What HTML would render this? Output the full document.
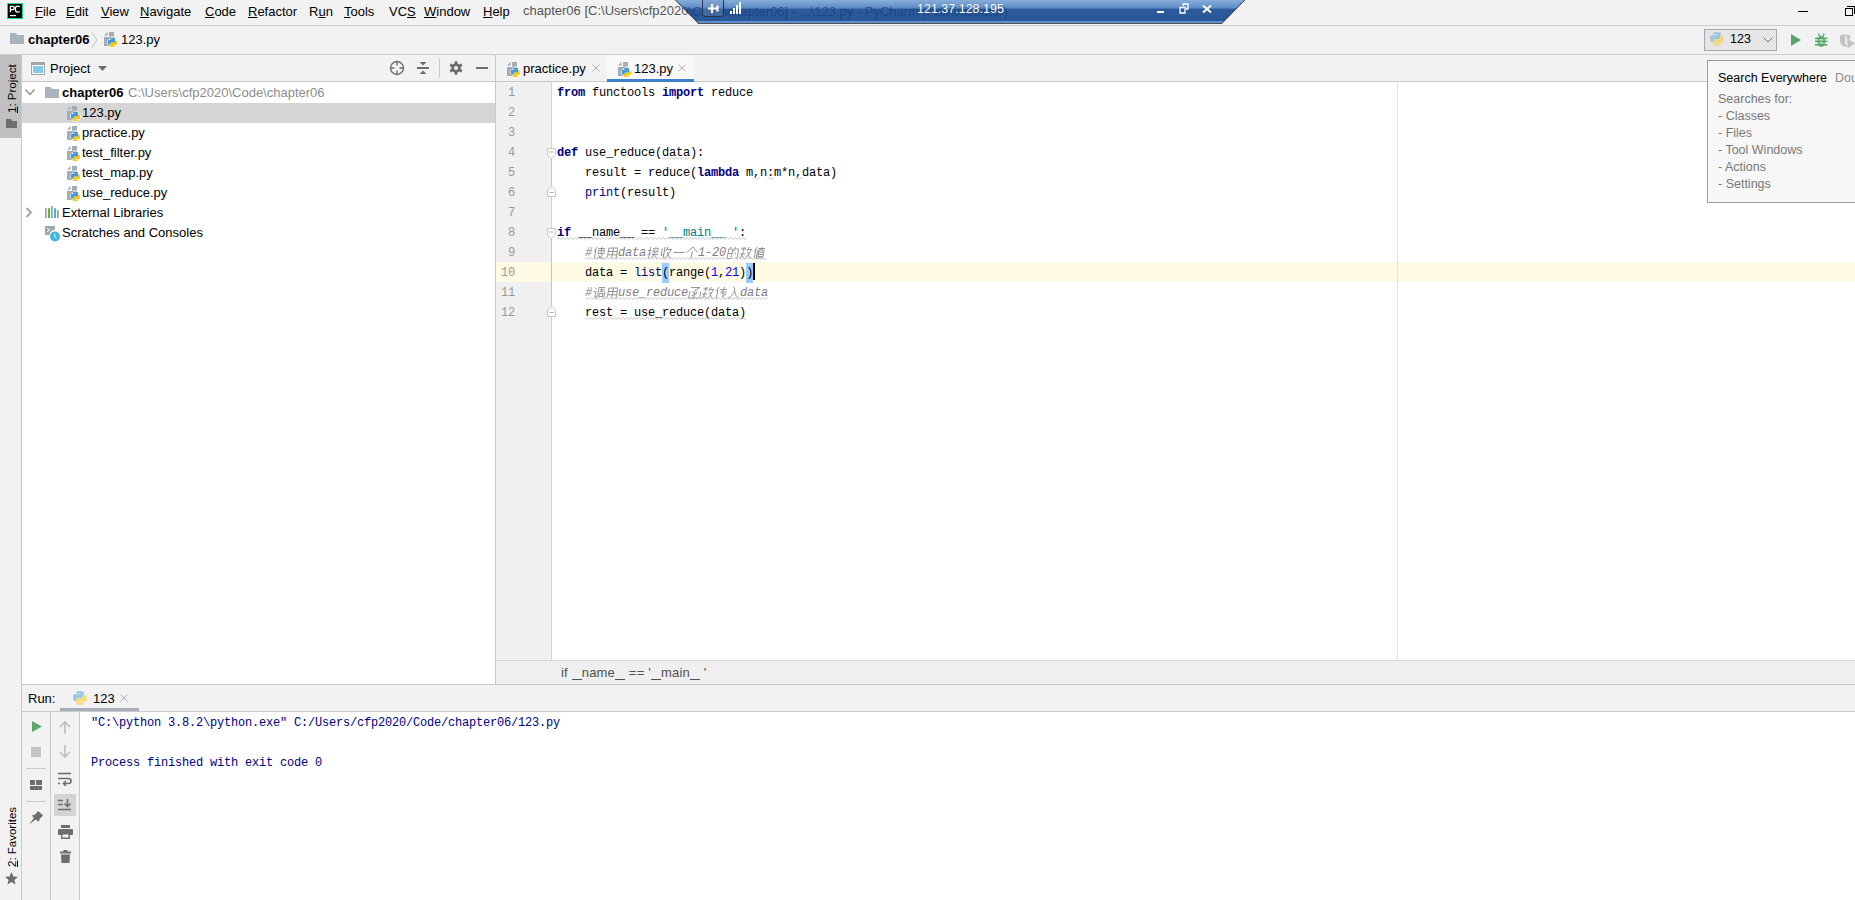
<!DOCTYPE html>
<html><head><meta charset="utf-8">
<style>
*{margin:0;padding:0;box-sizing:border-box}
html,body{width:1855px;height:900px;overflow:hidden;background:#f2f2f2;font-family:"Liberation Sans",sans-serif;font-size:13px;color:#000}
.a{position:absolute}
.t{position:absolute;white-space:pre;line-height:1}
.hl{position:absolute;height:1px;background:#c9c9c9}
.vl{position:absolute;width:1px;background:#c9c9c9}
.mono{font-family:"Liberation Mono",monospace}
u{text-decoration:underline;text-underline-offset:1px}
.menu{top:5px}
#gut div,#code div{height:20px;line-height:20px;white-space:pre;font-size:12px;letter-spacing:-0.2px}
.kw{color:#000080;font-weight:bold}
.bi{color:#000080}
.st{color:#008080}
.nu{color:#0000ff}
.cm{color:#808080;font-style:italic}
.cj{display:inline-block;width:13px;height:20px;vertical-align:top;letter-spacing:0}
.cj svg{display:block}
.br{background:#99ccff;display:inline-block;height:20px;vertical-align:top}
.caret{display:inline-block;width:2px;height:17px;background:#000;vertical-align:-4px}
.wv{text-decoration:underline wavy #c8c8c8;text-underline-offset:3px}
</style></head><body>
<svg width="0" height="0" style="position:absolute">
<defs>
<symbol id="pyf" viewBox="0 0 16 16">
<path d="M0 3.6L3.6 0V3.6Z" fill="#a2adb5"/>
<path d="M5 0H10V4.6H5Z" fill="#a2adb5"/>
<path d="M0 5H10V14H0Z" fill="#a2adb5"/>
<path d="M7 6H10Q11 6 11 7V9.5Q11 10.5 10 10.5H7.5Q6.5 10.5 6.5 11.5V12.5H5Q4 12.5 4 11.5V9Q4 8 5 8H8.5V7.5H6V7Q6 6 7 6Z" fill="#429bd6" stroke="#fff" stroke-width="1.2" paint-order="stroke"/>
<path d="M10 15H7Q6 15 6 14V11.5Q6 10.5 7 10.5H9.5Q10.5 10.5 10.5 9.5V8.5H12Q13 8.5 13 9.5V12Q13 13 12 13H8.5V13.5H11V14Q11 15 10 15Z" fill="#ffc80a" stroke="#fff" stroke-width="1.2" paint-order="stroke"/>
<path d="M7 6H10Q11 6 11 7V9.5Q11 10.5 10 10.5H7.5Q6.5 10.5 6.5 11.5V12.5H5Q4 12.5 4 11.5V9Q4 8 5 8H8.5V7.5H6V7Q6 6 7 6Z" fill="#429bd6"/>
</symbol>
<symbol id="py" viewBox="3.8 5.8 9.4 9.4">
<path d="M7 6H10Q11 6 11 7V9.5Q11 10.5 10 10.5H7.5Q6.5 10.5 6.5 11.5V12.5H5Q4 12.5 4 11.5V9Q4 8 5 8H8.5V7.5H6V7Q6 6 7 6Z" fill="#429bd6"/>
<path d="M10 15H7Q6 15 6 14V11.5Q6 10.5 7 10.5H9.5Q10.5 10.5 10.5 9.5V8.5H12Q13 8.5 13 9.5V12Q13 13 12 13H8.5V13.5H11V14Q11 15 10 15Z" fill="#ffc80a"/>
</symbol>
</defs>
</svg>

<!-- MENU BAR -->
<svg class="a" style="left:7px;top:3px" width="16" height="16"><rect x="0" y="0" width="16" height="16" fill="#21d789"/><rect x="1" y="1" width="14" height="14" fill="#000"/><g stroke="#fff" stroke-width="1.3" fill="none"><path d="M3.4 9.2V3.3H5.5Q7.2 3.3 7.2 5Q7.2 6.7 5.5 6.7H3.4"/><path d="M12.7 3.9Q12 3.2 10.6 3.2Q8.3 3.2 8.3 6.1Q8.3 9.1 10.6 9.1Q12 9.1 12.7 8.4"/></g><rect x="3" y="12" width="6" height="1.2" fill="#fff"/></svg>
<div class="t menu" style="left:35px"><u>F</u>ile</div>
<div class="t menu" style="left:66px"><u>E</u>dit</div>
<div class="t menu" style="left:101px"><u>V</u>iew</div>
<div class="t menu" style="left:140px"><u>N</u>avigate</div>
<div class="t menu" style="left:205px"><u>C</u>ode</div>
<div class="t menu" style="left:248px"><u>R</u>efactor</div>
<div class="t menu" style="left:309px">R<u>u</u>n</div>
<div class="t menu" style="left:344px"><u>T</u>ools</div>
<div class="t menu" style="left:389px">VC<u>S</u></div>
<div class="t menu" style="left:424px"><u>W</u>indow</div>
<div class="t menu" style="left:483px"><u>H</u>elp</div>
<div class="t" style="left:523px;top:4px;color:#555">chapter06 [C:\Users\cfp2020\Code\chapter06] - ...\123.py - PyCharm (Administrator)</div>
<div class="a" style="left:1798px;top:11px;width:10px;height:1px;background:#000"></div>
<div class="a" style="left:1845px;top:8px;width:8px;height:8px;border:1px solid #000"></div>
<div class="a" style="left:1847px;top:6px;width:8px;height:8px;border-top:1px solid #000;border-right:1px solid #000"></div>
<div class="hl" style="left:0;top:25px;width:1855px;background:#cdcdcd"></div>

<!-- NAV BAR -->
<svg class="a" style="left:10px;top:33px" width="14" height="11"><path d="M0 0H6L7 2H14V11H0Z" fill="#aab4bd"/></svg>
<div class="t" style="left:28px;top:33px;font-weight:bold">chapter06</div>
<svg class="a" style="left:91px;top:32px" width="7" height="16"><path d="M1 0.5L6 8L1 15.5" stroke="#c0c0c0" fill="none" stroke-width="1"/></svg>
<svg class="a" style="left:104px;top:32px" width="16" height="16"><use href="#pyf"/></svg>
<div class="t" style="left:121px;top:33px">123.py</div>

<!-- RUN CONFIG -->
<div class="a" style="left:1704px;top:29px;width:73px;height:22px;background:#e6e6e6;border:1px solid #a8a8a8"></div>
<svg class="a" style="left:1710px;top:32px;opacity:.45" width="14" height="14"><use href="#py"/></svg>
<div class="t" style="left:1730px;top:33px;font-size:12.5px">123</div>
<svg class="a" style="left:1763px;top:37px" width="10" height="6"><path d="M0.5 0.5L5 5L9.5 0.5" stroke="#6e6e6e" fill="none"/></svg>
<svg class="a" style="left:1791px;top:34px" width="10" height="12"><path d="M0 0L10 6L0 12Z" fill="#59a869"/></svg>
<svg class="a" style="left:1815px;top:33px" width="13" height="15"><g fill="#59a869"><ellipse cx="6.3" cy="8.3" rx="3.8" ry="5.6"/><rect x="0" y="4.6" width="12.4" height="1.6"/><rect x="0" y="7.6" width="12.4" height="1.6"/><rect x="0" y="11" width="12.4" height="1.6"/></g><path d="M3.3 0.5L4.8 3.3M9.3 0.5L7.8 3.3" stroke="#59a869" stroke-width="1.4"/><rect x="4.3" y="6.3" width="4" height="1.2" fill="#f2f2f2" opacity=".9"/><rect x="4.3" y="9.3" width="4" height="1.2" fill="#f2f2f2" opacity=".9"/></svg>
<svg class="a" style="left:1840px;top:34px" width="15" height="15"><path d="M0 1.3Q5 -0.5 10 1.3V7Q10 11 5 13Q0 11 0 7Z" fill="#c2c2c2"/><rect x="5" y="1.5" width="1.6" height="9" fill="#f2f2f2"/><path d="M7.5 4.5L15 9.5L7.5 14.5Z" fill="#c2c2c2" stroke="#f2f2f2" stroke-width="1" paint-order="stroke"/></svg>
<div class="hl" style="left:0;top:54px;width:1855px;background:#cdcdcd"></div>

<!-- LEFT STRIP -->
<div class="a" style="left:0;top:55px;width:21px;height:83px;background:#c0c0c0"></div>
<div class="t" style="left:7px;top:113px;font-size:11.5px;transform-origin:0 0;transform:rotate(-90deg)"><u>1</u>: Project</div>
<svg class="a" style="left:6px;top:119px" width="11" height="9"><path d="M0 0H5L6 2H11V9H0Z" fill="#6e6e6e"/></svg>
<div class="t" style="left:7px;top:867px;font-size:11.5px;transform-origin:0 0;transform:rotate(-90deg)"><u>2</u>: Favorites</div>
<svg class="a" style="left:5px;top:872px" width="13" height="13"><path d="M6.5 0L8.4 4.4L13 4.8L9.5 7.9L10.6 12.5L6.5 10L2.4 12.5L3.5 7.9L0 4.8L4.6 4.4Z" fill="#6e6e6e"/></svg>
<div class="vl" style="left:21px;top:55px;height:845px"></div>

<!-- PROJECT PANEL -->
<svg class="a" style="left:31px;top:62px" width="14" height="13"><rect x="0.5" y="0.5" width="13" height="12" fill="#fff" stroke="#a4a4a4"/><rect x="1" y="1" width="12" height="2" fill="#a4a4a4"/><rect x="2" y="4" width="10" height="7" fill="#80cbe8"/></svg>
<div class="t" style="left:50px;top:62px">Project</div>
<svg class="a" style="left:98px;top:66px" width="10" height="6"><path d="M0 0H9L4.5 5Z" fill="#6e6e6e"/></svg>
<svg class="a" style="left:389px;top:60px" width="16" height="16"><circle cx="8" cy="8" r="6.5" stroke="#6e6e6e" stroke-width="1.4" fill="none"/><path d="M8 1.5V5.5M8 10.5V14.5M1.5 8H5.5M10.5 8H14.5" stroke="#6e6e6e" stroke-width="1.4"/></svg>
<svg class="a" style="left:417px;top:61px" width="13" height="14"><path d="M2.5 1H9.5L6 4.5Z M2.5 13H9.5L6 9.5Z" fill="#6e6e6e"/><rect x="0" y="6" width="12" height="2" fill="#6e6e6e"/></svg>
<div class="a" style="left:439px;top:58px;width:1px;height:20px;background:#c9c9c9"></div>
<svg class="a" style="left:449px;top:61px" width="14" height="14"><g fill="#6e6e6e"><circle cx="7" cy="7" r="4.7"/><rect x="5.5" y="0.3" width="3" height="13.4" rx=".6"/><rect x="5.5" y="0.3" width="3" height="13.4" rx=".6" transform="rotate(60 7 7)"/><rect x="5.5" y="0.3" width="3" height="13.4" rx=".6" transform="rotate(120 7 7)"/></g><circle cx="7" cy="7" r="2" fill="#f2f2f2"/></svg>
<div class="a" style="left:476px;top:67px;width:12px;height:2px;background:#6e6e6e"></div>
<div class="hl" style="left:22px;top:81px;width:473px"></div>
<div class="a" style="left:22px;top:82px;width:473px;height:602px;background:#fff"></div>
<div class="a" style="left:22px;top:103px;width:473px;height:20px;background:#d5d5d5"></div>
<svg class="a" style="left:25px;top:89px" width="10" height="7"><path d="M0.5 0.5L5 5.5L9.5 0.5" stroke="#8c8c8c" stroke-width="1.3" fill="none"/></svg>
<svg class="a" style="left:45px;top:87px" width="14" height="11"><path d="M0 0H6L7 2H14V11H0Z" fill="#aab4bd"/></svg>
<div class="t" style="left:62px;top:86px;font-weight:bold">chapter06</div>
<div class="t" style="left:128px;top:86px;color:#8c8c8c">C:\Users\cfp2020\Code\chapter06</div>
<svg class="a" style="left:67px;top:106px" width="16" height="16"><use href="#pyf"/></svg>
<div class="t" style="left:82px;top:106px">123.py</div>
<svg class="a" style="left:67px;top:126px" width="16" height="16"><use href="#pyf"/></svg>
<div class="t" style="left:82px;top:126px">practice.py</div>
<svg class="a" style="left:67px;top:146px" width="16" height="16"><use href="#pyf"/></svg>
<div class="t" style="left:82px;top:146px">test_filter.py</div>
<svg class="a" style="left:67px;top:166px" width="16" height="16"><use href="#pyf"/></svg>
<div class="t" style="left:82px;top:166px">test_map.py</div>
<svg class="a" style="left:67px;top:186px" width="16" height="16"><use href="#pyf"/></svg>
<div class="t" style="left:82px;top:186px">use_reduce.py</div>
<svg class="a" style="left:25px;top:207px" width="9" height="12"><path d="M1.5 1L6 5.5L1.5 10" stroke="#a0a0a0" stroke-width="1.8" fill="none"/></svg>
<svg class="a" style="left:45px;top:206px" width="15" height="12"><g fill="#9aa7b0"><rect x="0" y="2.2" width="1.8" height="9.8"/><rect x="6" y="0" width="1.8" height="12"/><rect x="12" y="4" width="1.8" height="8"/></g><rect x="3" y="2.2" width="2" height="9.8" fill="#62b543"/><rect x="9" y="2.2" width="2" height="9.8" fill="#40b6e0"/></svg>
<div class="t" style="left:62px;top:206px">External Libraries</div>
<svg class="a" style="left:45px;top:226px" width="16" height="16"><path d="M0 0H10V3.5A5.6 5.6 0 0 0 4.6 9H0Z" fill="#9aa7b0"/><path d="M2 2L4.5 4L2 6" stroke="#fff" stroke-width="1" fill="none"/><circle cx="10" cy="10.5" r="5" fill="#40b6e0"/><path d="M9.7 7.7V10.5L11.5 12" stroke="#fff" stroke-width="1" fill="none"/></svg>
<div class="t" style="left:62px;top:226px">Scratches and Consoles</div>
<div class="vl" style="left:495px;top:55px;height:630px"></div>

<!-- EDITOR TABS -->
<div class="a" style="left:607px;top:55px;width:87px;height:24px;background:#f9f9f9"></div>
<svg class="a" style="left:507px;top:62px" width="16" height="16"><use href="#pyf"/></svg>
<div class="t" style="left:523px;top:62px">practice.py</div>
<svg class="a" style="left:592px;top:64px" width="9" height="9"><path d="M0.5 0.5L7.5 7.5M7.5 0.5L0.5 7.5" stroke="#a8a8a8" stroke-width=".9"/></svg>
<svg class="a" style="left:618px;top:62px" width="16" height="16"><use href="#pyf"/></svg>
<div class="t" style="left:634px;top:62px">123.py</div>
<svg class="a" style="left:678px;top:64px" width="9" height="9"><path d="M0.5 0.5L7.5 7.5M7.5 0.5L0.5 7.5" stroke="#a8a8a8" stroke-width=".9"/></svg>
<div class="hl" style="left:496px;top:81px;width:1359px"></div>
<div class="a" style="left:607px;top:79px;width:87px;height:3px;background:#3f80c8"></div>

<!-- EDITOR -->
<div class="a" style="left:496px;top:82px;width:1359px;height:578px;background:#fff"></div>
<div class="a" style="left:496px;top:82px;width:55px;height:578px;background:#f0f0f0"></div>
<div class="a" style="left:551px;top:82px;width:1px;height:578px;background:#d5d5d5"></div>
<div class="a" style="left:496px;top:262px;width:55px;height:20px;background:#fffae3"></div>
<div class="a" style="left:552px;top:262px;width:1303px;height:20px;background:#fffae3"></div>
<div class="a" style="left:1397px;top:82px;width:1px;height:578px;background:#e4e4e4"></div>
<div class="a" style="left:1397px;top:262px;width:1px;height:20px;background:#ece6cf"></div>
<div class="a" style="left:551px;top:152px;width:1px;height:40px;background:#c6c6c6"></div>
<div class="a" style="left:551px;top:232px;width:1px;height:80px;background:#c6c6c6"></div>
<svg class="a" style="left:546px;top:148px" width="11" height="11"><path d="M1.5 0.5H9.5V7L5.5 10.3L1.5 7Z" fill="#fff" stroke="#c6c6c6"/><path d="M3.5 4H7.5" stroke="#b0b0b0"/></svg>
<svg class="a" style="left:546px;top:186px" width="11" height="11"><path d="M1.5 10.5H9.5V4L5.5 0.7L1.5 4Z" fill="#fff" stroke="#c6c6c6"/><path d="M3.5 6.5H7.5" stroke="#b0b0b0"/></svg>
<svg class="a" style="left:546px;top:228px" width="11" height="11"><path d="M1.5 0.5H9.5V7L5.5 10.3L1.5 7Z" fill="#fff" stroke="#c6c6c6"/><path d="M3.5 4H7.5" stroke="#b0b0b0"/></svg>
<svg class="a" style="left:546px;top:306px" width="11" height="11"><path d="M1.5 10.5H9.5V4L5.5 0.7L1.5 4Z" fill="#fff" stroke="#c6c6c6"/><path d="M3.5 6.5H7.5" stroke="#b0b0b0"/></svg>
<div id="gut" class="a mono" style="left:496px;top:83px;width:19px;color:#999;text-align:right"><div>1</div><div>2</div><div>3</div><div>4</div><div>5</div><div>6</div><div>7</div><div>8</div><div>9</div><div>10</div><div>11</div><div>12</div></div>
<div id="code" class="a mono" style="left:557px;top:83px"><div><span class="kw">from</span> functools <span class="kw">import</span> reduce</div><div></div><div></div><div><span class="kw">def</span> use_reduce(<span>data</span>):</div><div>    result = reduce(<span class="kw">lambda</span> m,n:m*n,data)</div><div>    <span class="bi">print</span>(result)</div><div></div><div><span><span class="kw">if</span> __name__ == <span class="st">'__main__ '</span>:</span></div><div>    <span class="cm">#<span class="cj"><svg width="13" height="20"><path transform="translate(2.2 3.5) skewX(-10)" d="M3 0.5L1 5M2.2 3V12M4.5 2H11.5M8 0.5V8M5 4H11V7H5ZM5.5 8.5Q8 12 11.5 12M10.5 8Q8 11 4.5 12" stroke="#8e8e8e" stroke-width="0.9" fill="none"/></svg></span><span class="cj"><svg width="13" height="20"><path transform="translate(2.2 3.5) skewX(-10)" d="M2 1.5V9Q2 11 0.5 12M2 1.5H11V11.5Q11 12 10 11.7M2 5H11M2 8.3H11M6.5 1.5V12" stroke="#8e8e8e" stroke-width="0.9" fill="none"/></svg></span>data<span class="cj"><svg width="13" height="20"><path transform="translate(2.2 3.5) skewX(-10)" d="M0.5 4H4M2.5 0.5V11.5Q2.5 12 1.5 11.5M0.5 8.5L4 6.5M8 0.5V2M5 2.3H11.5M6.5 3.3L7 5M10 3.3L9.5 5M5 5.3H11.5M5 8H11.5M8 5.5Q7 9 5 12M6.5 8Q9 11 11.5 12" stroke="#8e8e8e" stroke-width="0.9" fill="none"/></svg></span><span class="cj"><svg width="13" height="20"><path transform="translate(2.2 3.5) skewX(-10)" d="M1.5 2V9L4 7.5M4 0.5V12M7 0.5L5.5 4.5M6.5 3H11.5M10.5 3Q9 9 5 12M7 5.5Q9 10 11.5 12" stroke="#8e8e8e" stroke-width="0.9" fill="none"/></svg></span><span class="cj"><svg width="13" height="20"><path transform="translate(2.2 3.5) skewX(-10)" d="M0.5 6H11.5" stroke="#8e8e8e" stroke-width="0.9" fill="none"/></svg></span><span class="cj"><svg width="13" height="20"><path transform="translate(2.2 3.5) skewX(-10)" d="M6 0.5L0.5 6M6 0.5L11.5 6M6 5V12" stroke="#8e8e8e" stroke-width="0.9" fill="none"/></svg></span>1-20<span class="cj"><svg width="13" height="20"><path transform="translate(2.2 3.5) skewX(-10)" d="M3 0.5L2 2M1 2.5H5V12H1ZM1 7H5M7.5 0.5L6 5M7 2.5H11V11Q11 12 9.5 11.5M7.5 6L9 8" stroke="#8e8e8e" stroke-width="0.9" fill="none"/></svg></span><span class="cj"><svg width="13" height="20"><path transform="translate(2.2 3.5) skewX(-10)" d="M3 0.5V5M0.5 2.5H5.5M1 1L2 2M5 1L4 2M0.5 7.5H5.5M3 5.5Q2.5 10 0.5 12M1.5 8Q4 11 5.5 12M8 0.5L6.5 4.5M7 3H11.5M10.5 3Q9.5 9 6 12M7.5 5.5Q9 10 11.5 12" stroke="#8e8e8e" stroke-width="0.9" fill="none"/></svg></span><span class="cj"><svg width="13" height="20"><path transform="translate(2.2 3.5) skewX(-10)" d="M3 0.5L1 5M2.2 3V12M4.5 2H11.5M8 0.5V3.5M5.5 3.5H10.5V10H5.5ZM5.5 5.7H10.5M5.5 7.9H10.5M4.2 3.5V11.5H11.5" stroke="#8e8e8e" stroke-width="0.9" fill="none"/></svg></span></span></div><div>    data = <span class="bi">list</span><span class="br">(</span>range(<span class="nu">1</span>,<span class="nu">21</span>)<span class="br">)</span><span class="caret"></span></div><div>    <span class="cm">#<span class="cj"><svg width="13" height="20"><path transform="translate(2.2 3.5) skewX(-10)" d="M1 1L2.5 2.5M0.5 5H2.5V11L4 9.5M5 1V9Q5 11 3.5 12M5 1H11.5V11.5Q11.5 12 10.5 11.5M6.5 3H10M8.2 2V5.5M6.5 5H10M6.5 7H10V10H6.5Z" stroke="#8e8e8e" stroke-width="0.9" fill="none"/></svg></span><span class="cj"><svg width="13" height="20"><path transform="translate(2.2 3.5) skewX(-10)" d="M2 1.5V9Q2 11 0.5 12M2 1.5H11V11.5Q11 12 10 11.7M2 5H11M2 8.3H11M6.5 1.5V12" stroke="#8e8e8e" stroke-width="0.9" fill="none"/></svg></span>use_reduce<span class="cj"><svg width="13" height="20"><path transform="translate(2.2 3.5) skewX(-10)" d="M1 1H10L6 4M5.5 3V11.5Q5.5 12 4.5 11.5M3 5L4.5 7M8 5L6.5 7M3 9.5L8 7M0.5 4.5V11.5H11.5V4.5" stroke="#8e8e8e" stroke-width="0.9" fill="none"/></svg></span><span class="cj"><svg width="13" height="20"><path transform="translate(2.2 3.5) skewX(-10)" d="M3 0.5V5M0.5 2.5H5.5M1 1L2 2M5 1L4 2M0.5 7.5H5.5M3 5.5Q2.5 10 0.5 12M1.5 8Q4 11 5.5 12M8 0.5L6.5 4.5M7 3H11.5M10.5 3Q9.5 9 6 12M7.5 5.5Q9 10 11.5 12" stroke="#8e8e8e" stroke-width="0.9" fill="none"/></svg></span><span class="cj"><svg width="13" height="20"><path transform="translate(2.2 3.5) skewX(-10)" d="M3 0.5L1 5M2.2 3V12M4.5 3H11.5M5 5.5H11.5M8.5 0.5L7 7.5H11L8 10M7.5 9L10 12" stroke="#8e8e8e" stroke-width="0.9" fill="none"/></svg></span><span class="cj"><svg width="13" height="20"><path transform="translate(2.2 3.5) skewX(-10)" d="M4 0.5Q6 1 6 3Q6 9 0.5 12M6 4Q8 10 11.5 12" stroke="#8e8e8e" stroke-width="0.9" fill="none"/></svg></span>data</span></div><div>    <span>rest = use_reduce(data)</span></div></div>

<svg class="a" style="left:662px;top:157px" width="28" height="3"><path d="M0 2.5L2 0.5L4 2.5L6 0.5L8 2.5L10 0.5L12 2.5L14 0.5L16 2.5L18 0.5L20 2.5L22 0.5L24 2.5L26 0.5L28 2.5" stroke="#c4c4c4" stroke-width="1" fill="none"/></svg>
<svg class="a" style="left:753px;top:177px" width="7" height="3"><path d="M0 2.5L2 0.5L4 2.5L6 0.5L8 2.5" stroke="#c4c4c4" stroke-width="1" fill="none"/></svg>
<svg class="a" style="left:767px;top:177px" width="7" height="3"><path d="M0 2.5L2 0.5L4 2.5L6 0.5L8 2.5" stroke="#c4c4c4" stroke-width="1" fill="none"/></svg>
<svg class="a" style="left:795px;top:177px" width="7" height="3"><path d="M0 2.5L2 0.5L4 2.5L6 0.5L8 2.5" stroke="#c4c4c4" stroke-width="1" fill="none"/></svg>
<svg class="a" style="left:557px;top:237px" width="189" height="3"><path d="M0 2.5L2 0.5L4 2.5L6 0.5L8 2.5L10 0.5L12 2.5L14 0.5L16 2.5L18 0.5L20 2.5L22 0.5L24 2.5L26 0.5L28 2.5L30 0.5L32 2.5L34 0.5L36 2.5L38 0.5L40 2.5L42 0.5L44 2.5L46 0.5L48 2.5L50 0.5L52 2.5L54 0.5L56 2.5L58 0.5L60 2.5L62 0.5L64 2.5L66 0.5L68 2.5L70 0.5L72 2.5L74 0.5L76 2.5L78 0.5L80 2.5L82 0.5L84 2.5L86 0.5L88 2.5L90 0.5L92 2.5L94 0.5L96 2.5L98 0.5L100 2.5L102 0.5L104 2.5L106 0.5L108 2.5L110 0.5L112 2.5L114 0.5L116 2.5L118 0.5L120 2.5L122 0.5L124 2.5L126 0.5L128 2.5L130 0.5L132 2.5L134 0.5L136 2.5L138 0.5L140 2.5L142 0.5L144 2.5L146 0.5L148 2.5L150 0.5L152 2.5L154 0.5L156 2.5L158 0.5L160 2.5L162 0.5L164 2.5L166 0.5L168 2.5L170 0.5L172 2.5L174 0.5L176 2.5L178 0.5L180 2.5L182 0.5L184 2.5L186 0.5L188 2.5L190 0.5" stroke="#c4c4c4" stroke-width="1" fill="none"/></svg>
<svg class="a" style="left:585px;top:257px" width="181" height="3"><path d="M0 2.5L2 0.5L4 2.5L6 0.5L8 2.5L10 0.5L12 2.5L14 0.5L16 2.5L18 0.5L20 2.5L22 0.5L24 2.5L26 0.5L28 2.5L30 0.5L32 2.5L34 0.5L36 2.5L38 0.5L40 2.5L42 0.5L44 2.5L46 0.5L48 2.5L50 0.5L52 2.5L54 0.5L56 2.5L58 0.5L60 2.5L62 0.5L64 2.5L66 0.5L68 2.5L70 0.5L72 2.5L74 0.5L76 2.5L78 0.5L80 2.5L82 0.5L84 2.5L86 0.5L88 2.5L90 0.5L92 2.5L94 0.5L96 2.5L98 0.5L100 2.5L102 0.5L104 2.5L106 0.5L108 2.5L110 0.5L112 2.5L114 0.5L116 2.5L118 0.5L120 2.5L122 0.5L124 2.5L126 0.5L128 2.5L130 0.5L132 2.5L134 0.5L136 2.5L138 0.5L140 2.5L142 0.5L144 2.5L146 0.5L148 2.5L150 0.5L152 2.5L154 0.5L156 2.5L158 0.5L160 2.5L162 0.5L164 2.5L166 0.5L168 2.5L170 0.5L172 2.5L174 0.5L176 2.5L178 0.5L180 2.5L182 0.5" stroke="#c4c4c4" stroke-width="1" fill="none"/></svg>
<svg class="a" style="left:585px;top:297px" width="183" height="3"><path d="M0 2.5L2 0.5L4 2.5L6 0.5L8 2.5L10 0.5L12 2.5L14 0.5L16 2.5L18 0.5L20 2.5L22 0.5L24 2.5L26 0.5L28 2.5L30 0.5L32 2.5L34 0.5L36 2.5L38 0.5L40 2.5L42 0.5L44 2.5L46 0.5L48 2.5L50 0.5L52 2.5L54 0.5L56 2.5L58 0.5L60 2.5L62 0.5L64 2.5L66 0.5L68 2.5L70 0.5L72 2.5L74 0.5L76 2.5L78 0.5L80 2.5L82 0.5L84 2.5L86 0.5L88 2.5L90 0.5L92 2.5L94 0.5L96 2.5L98 0.5L100 2.5L102 0.5L104 2.5L106 0.5L108 2.5L110 0.5L112 2.5L114 0.5L116 2.5L118 0.5L120 2.5L122 0.5L124 2.5L126 0.5L128 2.5L130 0.5L132 2.5L134 0.5L136 2.5L138 0.5L140 2.5L142 0.5L144 2.5L146 0.5L148 2.5L150 0.5L152 2.5L154 0.5L156 2.5L158 0.5L160 2.5L162 0.5L164 2.5L166 0.5L168 2.5L170 0.5L172 2.5L174 0.5L176 2.5L178 0.5L180 2.5L182 0.5L184 2.5" stroke="#c4c4c4" stroke-width="1" fill="none"/></svg>
<svg class="a" style="left:585px;top:317px" width="161" height="3"><path d="M0 2.5L2 0.5L4 2.5L6 0.5L8 2.5L10 0.5L12 2.5L14 0.5L16 2.5L18 0.5L20 2.5L22 0.5L24 2.5L26 0.5L28 2.5L30 0.5L32 2.5L34 0.5L36 2.5L38 0.5L40 2.5L42 0.5L44 2.5L46 0.5L48 2.5L50 0.5L52 2.5L54 0.5L56 2.5L58 0.5L60 2.5L62 0.5L64 2.5L66 0.5L68 2.5L70 0.5L72 2.5L74 0.5L76 2.5L78 0.5L80 2.5L82 0.5L84 2.5L86 0.5L88 2.5L90 0.5L92 2.5L94 0.5L96 2.5L98 0.5L100 2.5L102 0.5L104 2.5L106 0.5L108 2.5L110 0.5L112 2.5L114 0.5L116 2.5L118 0.5L120 2.5L122 0.5L124 2.5L126 0.5L128 2.5L130 0.5L132 2.5L134 0.5L136 2.5L138 0.5L140 2.5L142 0.5L144 2.5L146 0.5L148 2.5L150 0.5L152 2.5L154 0.5L156 2.5L158 0.5L160 2.5L162 0.5" stroke="#c4c4c4" stroke-width="1" fill="none"/></svg>
<!-- EDITOR BREADCRUMB -->
<div class="hl" style="left:496px;top:660px;width:1359px;background:#d5d5d5"></div>
<div class="a" style="left:496px;top:661px;width:1359px;height:23px;background:#efefef"></div>
<div class="t" style="left:561px;top:666px;color:#505050;letter-spacing:0.2px">if <span style="display:inline-block;width:10px;height:1px;background:#505050;vertical-align:-3px"></span>name<span style="display:inline-block;width:10px;height:1px;background:#505050;vertical-align:-3px"></span> == '<span style="display:inline-block;width:10px;height:1px;background:#505050;vertical-align:-3px"></span>main<span style="display:inline-block;width:10px;height:1px;background:#505050;vertical-align:-3px"></span> '</div>

<!-- RUN PANEL -->
<div class="hl" style="left:22px;top:684px;width:1833px"></div>
<div class="t" style="left:28px;top:692px">Run:</div>
<svg class="a" style="left:73px;top:691px;opacity:.5" width="14" height="14"><use href="#py"/></svg>
<div class="t" style="left:93px;top:692px">123</div>
<svg class="a" style="left:120px;top:694px" width="9" height="9"><path d="M0.5 0.5L7.5 7.5M7.5 0.5L0.5 7.5" stroke="#a8a8a8" stroke-width=".9"/></svg>
<div class="a" style="left:60px;top:708px;width:79px;height:3px;background:#a6aebb"></div>
<div class="hl" style="left:22px;top:711px;width:1833px"></div>
<div class="vl" style="left:50px;top:712px;height:188px"></div>
<div class="vl" style="left:79px;top:712px;height:188px"></div>
<div class="a" style="left:80px;top:712px;width:1775px;height:188px;background:#fff"></div>
<svg class="a" style="left:32px;top:721px" width="10" height="11"><path d="M0 0L10 5.5L0 11Z" fill="#59a869"/></svg>
<div class="a" style="left:31px;top:747px;width:10px;height:10px;background:#c4c4c4"></div>
<div class="a" style="left:26px;top:768px;width:20px;height:1px;background:#c9c9c9"></div>
<svg class="a" style="left:30px;top:780px" width="12" height="10"><g fill="#6e6e6e"><rect x="0" y="0" width="5" height="5"/><rect x="6" y="0" width="6" height="5"/><rect x="0" y="6" width="12" height="4"/></g></svg>
<div class="a" style="left:26px;top:801px;width:20px;height:1px;background:#c9c9c9"></div>
<svg class="a" style="left:28px;top:810px" width="17" height="16"><path d="M10.1 1.1L15.2 5.6L12 8.5L10.7 11.8L7.5 9.5L0.9 14.7L5.8 8L3.9 5.4L7.2 4.5Z" fill="#6e6e6e"/></svg>
<svg class="a" style="left:59px;top:721px" width="12" height="13"><path d="M6 1V13M1 6L6 1L11 6" stroke="#bdbdbd" stroke-width="1.6" fill="none"/></svg>
<svg class="a" style="left:59px;top:745px" width="12" height="13"><path d="M6 0V12M1 7L6 12L11 7" stroke="#bdbdbd" stroke-width="1.6" fill="none"/></svg>
<svg class="a" style="left:58px;top:772px" width="14" height="16"><g stroke="#6e6e6e" stroke-width="1.6" fill="none"><path d="M0 1.5H13"/><path d="M0 6.5H10.5a2.5 2.5 0 0 1 0 5H6"/><path d="M0 11.5H2"/><path d="M8 9L5.5 11.5L8 14"/></g></svg>
<div class="a" style="left:54px;top:794px;width:22px;height:22px;background:#d4d4d4"></div>
<svg class="a" style="left:58px;top:799px" width="14" height="12"><g stroke="#6e6e6e" stroke-width="1.6" fill="none"><path d="M0 1.5H5M0 5.5H5M0 10.5H13M9.5 0V7M6.5 4.5L9.5 7.5L12.5 4.5"/></g></svg>
<svg class="a" style="left:58px;top:825px" width="15" height="14"><g fill="#6e6e6e"><rect x="3" y="0" width="9" height="3"/><rect x="0" y="4" width="15" height="6" rx="1"/><rect x="3" y="8" width="9" height="6"/></g><rect x="4.5" y="9.5" width="6" height="3" fill="#f2f2f2"/></svg>
<svg class="a" style="left:60px;top:850px" width="11" height="13"><g fill="#6e6e6e"><rect x="3.5" y="0" width="4" height="2"/><rect x="0" y="1.5" width="11" height="2"/><path d="M1 4.5H10L9.5 13H1.5Z"/></g></svg>
<div class="t mono" style="left:91px;top:717px;color:#000080;font-size:12px;letter-spacing:-0.2px">"C:\python 3.8.2\python.exe" C:/Users/cfp2020/Code/chapter06/123.py</div>
<div class="t mono" style="left:91px;top:757px;color:#000080;font-size:12px;letter-spacing:-0.2px">Process finished with exit code 0</div>

<!-- SEARCH EVERYWHERE POPUP -->
<div class="a" style="left:1707px;top:60px;width:160px;height:143px;background:#f7f7f7;border:1px solid #9a9a9a"></div>
<div class="t" style="left:1718px;top:72px;font-size:12.5px">Search Everywhere</div>
<div class="t" style="left:1835px;top:72px;font-size:12.5px;color:#8c8c8c">Double Shift</div>
<div class="t" style="left:1718px;top:93px;font-size:12.5px;color:#787878">Searches for:</div>
<div class="t" style="left:1718px;top:110px;font-size:12.5px;color:#787878">- Classes</div>
<div class="t" style="left:1718px;top:127px;font-size:12.5px;color:#787878">- Files</div>
<div class="t" style="left:1718px;top:144px;font-size:12.5px;color:#787878">- Tool Windows</div>
<div class="t" style="left:1718px;top:161px;font-size:12.5px;color:#787878">- Actions</div>
<div class="t" style="left:1718px;top:178px;font-size:12.5px;color:#787878">- Settings</div>

<!-- RDP BAR -->
<svg class="a" style="left:0;top:0" width="1855" height="25">
<defs><linearGradient id="rg" x1="0" y1="0" x2="0" y2="24" gradientUnits="userSpaceOnUse">
<stop offset="0" stop-color="#88aedb"/><stop offset="0.35" stop-color="#5a89c6"/><stop offset="0.36" stop-color="#2d5a9b"/><stop offset="0.87" stop-color="#2a5797"/><stop offset="0.875" stop-color="#5f8fd0"/><stop offset="0.94" stop-color="#5f8fd0"/><stop offset="0.945" stop-color="#505050"/><stop offset="1" stop-color="#505050"/></linearGradient>
<clipPath id="rc"><path d="M675 0H1245L1221.5 24H699Z"/></clipPath></defs>
<path d="M675 0H1245L1221.5 24H699Z" fill="url(#rg)"/>
<path d="M675.5 0L699 24M1244.8 0L1221.3 24" stroke="#3c3c3c" stroke-width="1"/>
<g clip-path="url(#rc)"><text x="523" y="16" font-family="Liberation Sans" font-size="13" fill="#16407c" opacity=".7" xml:space="preserve">chapter06 [C:\Users\cfp2020\Code\chapter06] - ...\123.py - PyCharm (Administrator)</text></g>
</svg>
<div class="a" style="left:702px;top:-3px;width:22px;height:20px;border:1px solid #26364f;border-radius:3px;background:rgba(120,150,190,.35)"></div>
<svg class="a" style="left:708px;top:4px" width="13" height="10"><path d="M0 4.5H10M4 0V9M9.5 1.5V7.5" stroke="#fff" stroke-width="2.2"/></svg>
<svg class="a" style="left:730px;top:2px" width="12" height="12"><g fill="#fff"><rect x="0" y="9" width="2" height="3"/><rect x="3" y="6" width="2" height="6"/><rect x="6" y="3" width="2" height="9"/><rect x="9" y="0" width="2" height="12"/></g></svg>
<div class="t" style="left:917px;top:3px;color:#fff;font-size:12.5px;text-shadow:0 0 1px rgba(0,0,0,.3)">121.37.128.195</div>
<div class="a" style="left:1157px;top:11px;width:7px;height:2px;background:#fff"></div>
<svg class="a" style="left:1179px;top:3px" width="10" height="11"><path d="M1 4.5H6V10H1Z M4 3V1H9V6H7" stroke="#fff" stroke-width="1.3" fill="none"/></svg>
<svg class="a" style="left:1202px;top:5px" width="10" height="8"><path d="M1 0.5L9 7.5M9 0.5L1 7.5" stroke="#fff" stroke-width="2"/></svg>
</body></html>
